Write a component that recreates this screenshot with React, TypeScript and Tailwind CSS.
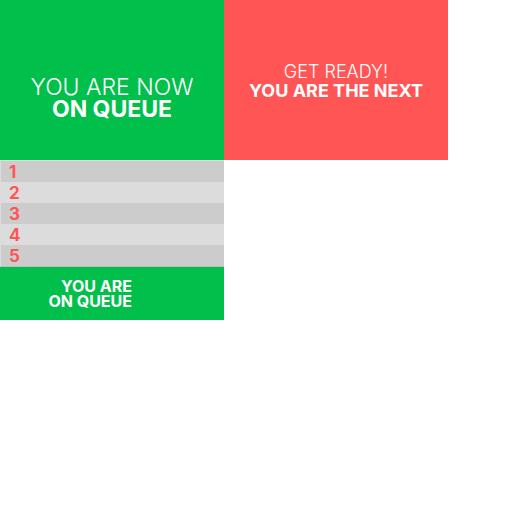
export default function App() {
  const rows = [1, 2, 3, 4, 5];
  return (
    <div className="w-[512px] h-[512px] bg-white" style={{ fontFamily: "Inter, 'Noto Sans', sans-serif" }}>
      <div className="flex">
        <div className="w-[224px] h-[160px] bg-[#00c04b] text-white flex flex-col items-center pt-[76px]">
          <div className="text-[23px] leading-[22px] font-light">YOU ARE NOW</div>
          <div className="text-[23px] leading-[23px] font-bold">ON QUEUE</div>
        </div>
        <div className="w-[224px] h-[160px] bg-[#ff5555] text-white flex flex-col items-center pt-[62px]">
          <div className="text-[18px] leading-[19px] font-light">GET READY!</div>
          <div className="text-[18px] leading-[20px] font-bold">YOU ARE THE NEXT</div>
        </div>
      </div>
      <div className="w-[224px] border-t border-l border-[#dcdcdc] border-b-[#bdbdbd] border-b">
        {rows.map((n, i) => (
          <div
            key={n}
            className={`h-[21px] flex items-center pl-[8px] pt-[2px] text-[17px] leading-[19px] font-bold text-[#ff5555] ${i % 2 === 0 ? "bg-[#cccccc]" : "bg-[#dcdcdc]"}`}
          >
            {n}
          </div>
        ))}
      </div>
      <div className="w-[224px] h-[53px] bg-[#00c04b] text-white flex flex-col items-end justify-center pr-[92px] font-bold text-[16px] leading-[15px]">
        <div>YOU ARE</div>
        <div>ON QUEUE</div>
      </div>
    </div>
  );
}
